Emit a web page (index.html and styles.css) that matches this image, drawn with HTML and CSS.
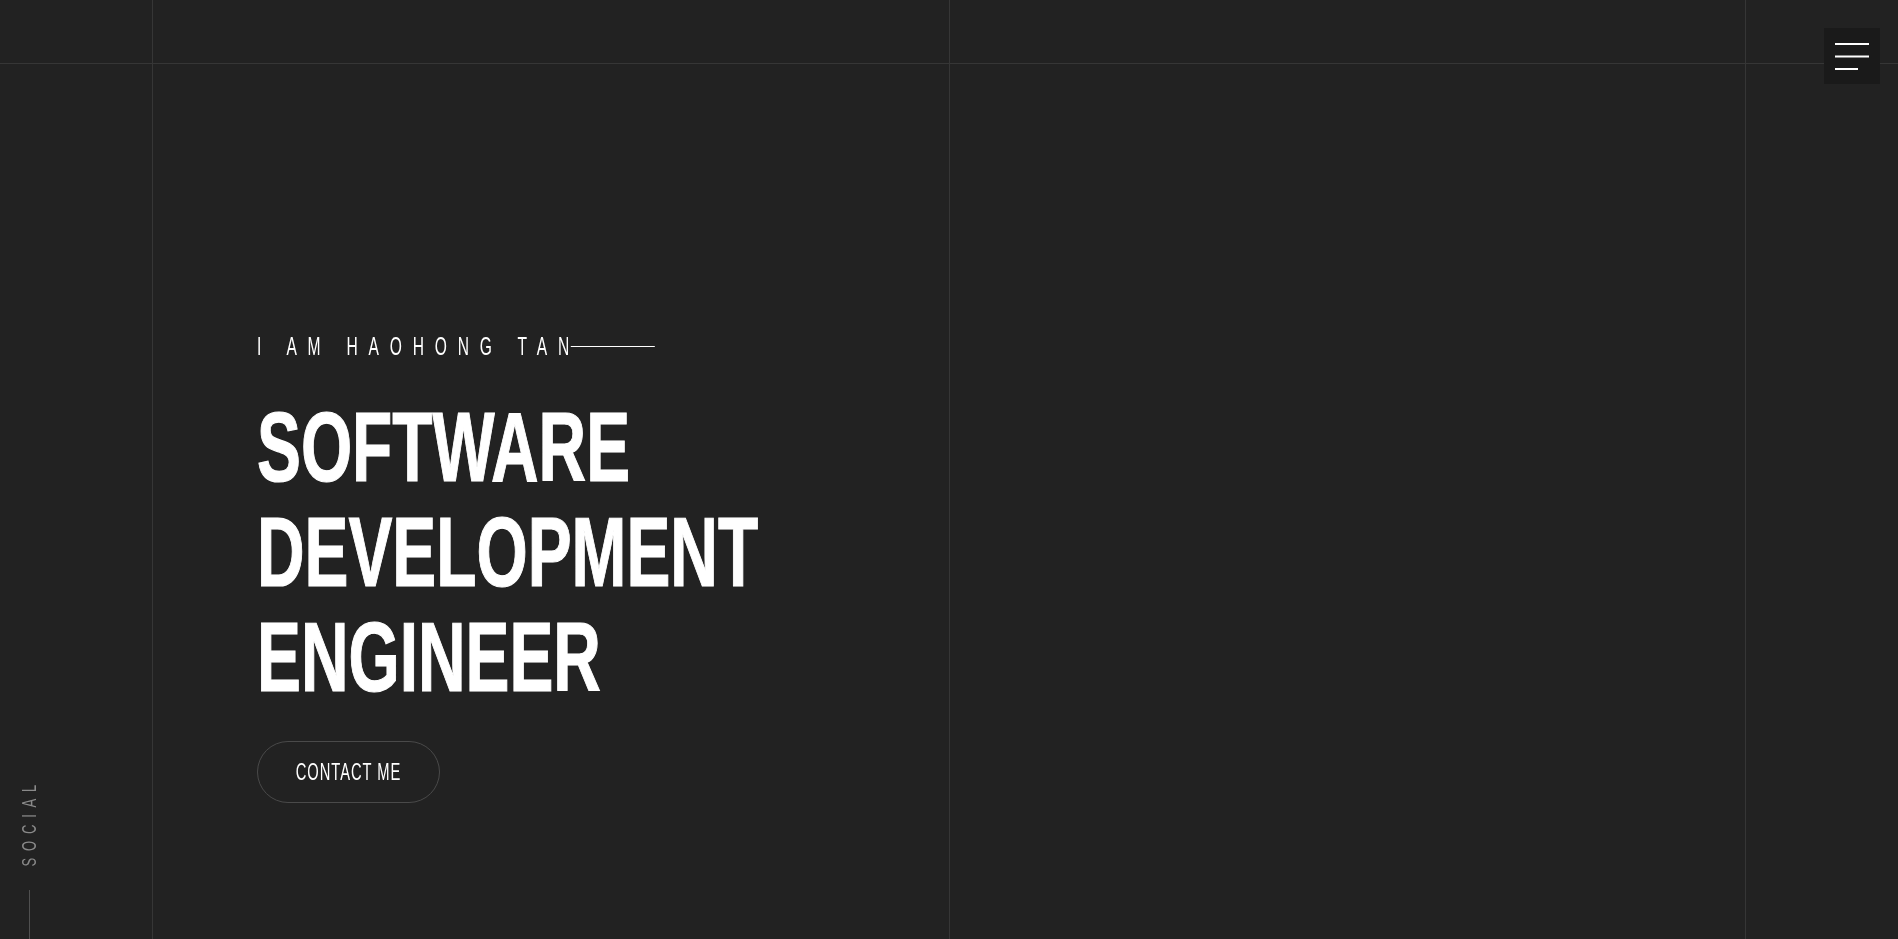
FILE: index.html
```html
<!DOCTYPE html>
<html lang="en">
<head>
<meta charset="utf-8">
<title>Haohong Tan</title>
<link rel="stylesheet" href="styles.css">
</head>
<body>
<div class="grid-lines" aria-hidden="true"><span class="col"></span><span class="col"></span></div>
<header class="topbar"></header>
<button class="menu-btn" aria-label="Menu">
  <svg width="34" height="28" viewBox="0 0 34 28">
    <rect x="0" y="1" width="34" height="2" fill="#fff"/>
    <rect x="0" y="13.5" width="34" height="2" fill="#fff"/>
    <rect x="0" y="26" width="23" height="2" fill="#fff"/>
  </svg>
</button>
<aside class="social">
  <span class="social-label">SOCIAL</span>
  <span class="social-line"></span>
</aside>
<main class="hero">
  <p class="intro"><span class="intro-text">I AM HAOHONG TAN</span><span class="intro-rule"></span></p>
  <h1 class="title"><span class="title-line">SOFTWARE</span><span class="title-line">DEVELOPMENT</span><span class="title-line">ENGINEER</span></h1>
  <a class="btn" href="#contact"><span class="btn-text">CONTACT ME</span></a>
</main>
</body>
</html>
```
FILE: styles.css
```css
* { box-sizing: border-box; }
html, body { margin: 0; padding: 0; }
body {
  background: #222222;
  color: #ffffff;
  font-family: "Liberation Sans", Arial, sans-serif;
  height: 939px;
  overflow: hidden;
}
.grid-lines {
  position: fixed;
  top: 0; bottom: 0; left: 152px; right: 152px;
  display: grid;
  grid-template-columns: 1fr 1fr;
  pointer-events: none;
}
.grid-lines .col { border-left: 1px solid #363636; }
.grid-lines .col:last-child { border-right: 1px solid #363636; }
.topbar {
  height: 64px;
  border-bottom: 1px solid #363636;
}
.menu-btn {
  position: absolute;
  top: 28px; right: 18px;
  width: 56px; height: 56px;
  background: #1a1a1a;
  border: 0;
  padding: 0;
  display: flex;
  align-items: center;
  justify-content: center;
}
.menu-btn svg { display: block; }
.social {
  position: fixed;
  left: 20px; bottom: 0;
  display: flex;
  flex-direction: column;
  align-items: center;
  gap: 0;
  width: 18px;
}
.social-label {
  writing-mode: vertical-rl;
  transform: rotate(180deg) scaleY(0.65);
  font-size: 20px;
  line-height: 20px;
  letter-spacing: 10.5px;
  color: #8a8a8a;
}
.social-line { width: 1px; height: 49px; background: #505050; }
.hero {
  position: relative;
  padding: 267px 0 0 257px;
}
.intro {
  margin: 0;
  display: flex;
  align-items: center;
  font-size: 26px;
  line-height: 30px;
  font-weight: 400;
  transform: scaleX(0.6);
  transform-origin: left center;
}
.intro-text { letter-spacing: 18px; white-space: nowrap; }
.intro-rule { flex: none; width: 140px; height: 1px; background: #fff; margin-left: -15px; }
.title {
  margin: 33px 0 0;
  font-size: 99px;
  line-height: 105px;
  font-weight: 700;
  -webkit-text-stroke: 1.2px #fff;
  transform: scaleX(0.665);
  transform-origin: left top;
}
.title-line { display: block; white-space: nowrap; }
.btn {
  display: inline-flex;
  align-items: center;
  justify-content: center;
  margin-top: 32px;
  width: 183px;
  height: 62px;
  border: 1px solid #4a4a4a;
  border-radius: 31px;
  color: #fff;
  text-decoration: none;
  font-size: 23px;
}
.btn-text {
  display: inline-block;
  white-space: nowrap;
  letter-spacing: 1.5px;
  transform: scaleX(0.64);
}
```
